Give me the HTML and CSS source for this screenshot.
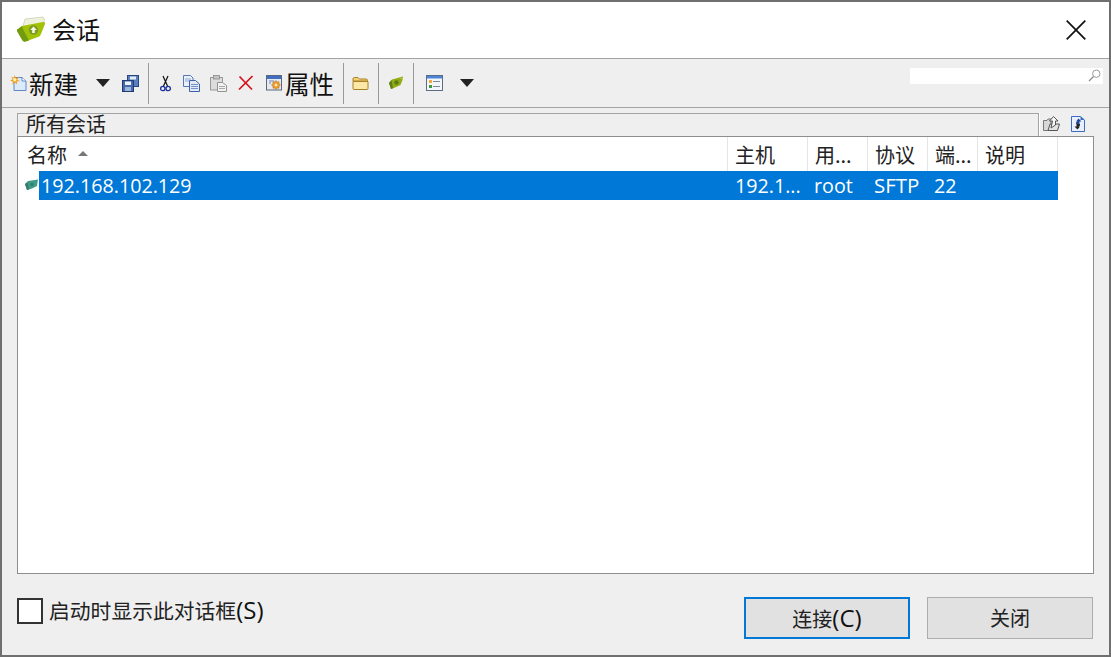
FILE: index.html
```html
<!DOCTYPE html>
<html lang="zh">
<head>
<meta charset="utf-8">
<title>会话</title>
<link rel="stylesheet" href="styles.css">
</head>
<body>
<div class="dialog">
  <header class="titlebar">
    <svg class="title-icon" width="30" height="27" viewBox="0 0 30 27"><path d="M7 10 L9 3 L27 1 L28.500 3 L27 10 L12 16Z" fill="#eef2dc" stroke="#c4cca8" stroke-width=".7"/><path d="M6 10 L27 6 Q29.500 5.500 29 8 L24.500 19 Q24 20.500 22 21 L9.500 25.500 Q7.500 26 6.500 24.500 L1 15 Q.5 13.500 2 13Z" fill="#a2c208"/><path d="M1 15 L6.500 24.500 Q7.500 26 9.500 25.500 L13 24.500 L7.500 14 L6 10 L2 13 Q.5 13.500 1 15Z" fill="#719c12"/><circle cx="17.500" cy="14" r="4.700" fill="#7f9a20"/><path d="M17.500 10.500 L20.800 14 H18.800 V17 H16.200 V14 H14.200Z" fill="#f7f8e6"/></svg>
    <h1 class="title">会话</h1>
    <svg class="close" width="20" height="20" viewBox="0 0 20 20"><path d="M.7.700 19.300 19.300M19.300.700.700 19.300" stroke="#111" stroke-width="1.700" fill="none"/></svg>
  </header>

  <div class="toolbar">
    <svg class="ic m-new" width="17" height="17" viewBox="0 0 17 17"><path d="M4 2.500H12L16 6V15.500H4Z" fill="#dcebfb" stroke="#5f86c4"/><path d="M12 2.500V6H16" fill="#fff" stroke="#5f86c4"/><path d="M4.500 0 5.800 3.200 9 1.800 7.200 4.700 9.800 6 6.800 6.500 7 9.500 4.800 7.300 2.500 9.500 2.800 6.500 0 5.500 2.800 4.200 1.200 1.500 3.800 3Z" fill="#f59a18"/><circle cx="4.800" cy="4.800" r="1.700" fill="#fff6b0"/></svg>
    <span class="big m-newtext">新建</span>
    <span class="arrow m-arrow1"></span>
    <svg class="ic m-save" width="17" height="17" viewBox="0 0 17 17"><rect x="5.500" y=".5" width="11" height="11" fill="#5a7fbf" stroke="#26467f"/><rect x="8" y="1.500" width="6" height="3" fill="#e4ecf8"/><rect x=".5" y="5.500" width="11" height="11" fill="#4669ac" stroke="#1f3c72"/><rect x="3" y="6.500" width="6" height="3.500" fill="#eef3fb"/><rect x="3" y="12" width="6" height="4" fill="#9db4dc"/></svg>
    <span class="sep m-sep1"></span>
    <svg class="ic m-cut" width="11" height="17" viewBox="0 0 11 17"><path d="M3 1 7.500 11M8 1 3.500 11" stroke="#111" stroke-width="1.200" fill="none"/><circle cx="2.800" cy="13.500" r="2.200" fill="none" stroke="#1c2d9c" stroke-width="1.300"/><circle cx="8.200" cy="13.500" r="2.200" fill="none" stroke="#1c2d9c" stroke-width="1.300"/></svg>
    <svg class="ic m-copy" width="17" height="17" viewBox="0 0 17 17"><path d="M.5.500H7.500L10 3V11.500H.5Z" fill="#eaf0fa" stroke="#5578b8"/><path d="M2 4H8M2 6H6" stroke="#8da5d2"/><path d="M6.500 5.500H12.500L16.500 9V16.500H6.500Z" fill="#e1e9f7" stroke="#3d62a8"/><path d="M8 9.500H15M8 11.500H15M8 13.500H15" stroke="#7792c6"/></svg>
    <svg class="ic m-paste" width="17" height="17" viewBox="0 0 17 17"><rect x=".5" y="2.500" width="12" height="12.500" fill="#dcdcdc" stroke="#9a9a9a"/><rect x="3.500" y=".5" width="6" height="3.500" fill="#c4c4c4" stroke="#8d8d8d" stroke-width=".8"/><path d="M7.500 7.500H12.500L16.500 10.500V16.500H7.500Z" fill="#f2f2f2" stroke="#939393"/><path d="M9 11.500H15M9 13.500H15" stroke="#aaa"/></svg>
    <svg class="ic m-del" width="16" height="16" viewBox="0 0 16 16"><path d="M1.500 1.500 14 14.500M14.500 1 1 14.500" stroke="#d8121c" stroke-width="1.700" fill="none"/></svg>
    <svg class="ic m-prop" width="16" height="16" viewBox="0 0 16 16"><rect x=".5" y=".5" width="15" height="14.500" fill="#e8e9ee" stroke="#5c6680"/><rect x="1" y="1" width="14" height="3" fill="#3f6fc0"/><path d="M3 6H8M3 8H5" stroke="#6d8bc8"/><path d="M10 5.500 11 7 13 6.800 13 8.800 14.500 10 13 11.200 13 13.200 11 13 10 14.500 9 13 7 13.200 7 11.200 5.500 10 7 8.800 7 6.800 9 7Z" fill="#f0a030" stroke="#a96a14" stroke-width=".5"/><circle cx="10" cy="10" r="1.200" fill="#fff4d0"/></svg>
    <span class="big m-proptext">属性</span>
    <span class="sep m-sep2"></span>
    <svg class="ic m-folder" width="17" height="15" viewBox="0 0 17 15"><path d="M1 3 Q1 1.500 2.500 1.500H6L7.500 3H14Q15.500 3 15.500 4.500V5H1Z" fill="#f3cf76" stroke="#a88226"/><path d="M1 5.500H16V12.500Q16 13.500 15 13.500H2Q1 13.500 1 12.500Z" fill="#fce7a6" stroke="#a88226"/></svg>
    <span class="sep m-sep3"></span>
    <svg class="ic m-leaf" width="16" height="14" viewBox="0 0 16 14"><path d="M1 7 L4 3.500 L15 .5 L14.500 4 L12.500 9 L7 11.500 L3 13Z" fill="#8fad12"/><path d="M1 7 L3 13 L5 12.300 L3.500 4Z" fill="#5e7f18"/><circle cx="8.500" cy="6.500" r="2.200" fill="#5d7a18"/><path d="M12.500 2.500H15" stroke="#b9cf55"/></svg>
    <span class="sep m-sep4"></span>
    <svg class="ic m-list" width="17" height="16" viewBox="0 0 17 16"><rect x=".5" y=".5" width="16" height="15" fill="#f4f6f8" stroke="#5c6c88"/><rect x="1" y="1" width="15" height="2.500" fill="#4b86d8"/><rect x="3" y="5" width="3" height="3" fill="#f0a93a"/><rect x="3" y="10" width="3" height="3" fill="#3f9a3f"/><path d="M7 6.500H14M7 11.500H14" stroke="#7a8aa0"/></svg>
    <span class="arrow m-arrow2"></span>
    <div class="search">
      <svg width="13" height="13" viewBox="0 0 13 13"><circle cx="8.300" cy="4.700" r="3.700" fill="none" stroke="#9a9a9a"/><path d="M5.500 7.500 1 12" stroke="#8a8a8a" stroke-width="1.300"/></svg>
    </div>
  </div>

  <main class="content">
    <div class="group-row">
      <div class="group-tab"><span class="group-label">所有会话</span></div>
      <svg class="ic g-up" width="17" height="15" viewBox="0 0 17 15"><path d="M.5 4.500H4L5 3H8V14.500H.5Z" fill="#d8d8d8" stroke="#777"/><path d="M5 14.500 7 8H16.500L14.500 14.500Z" fill="#e2e2e2" stroke="#555"/><path d="M10.500 .5 15 5H12.500V9L8 12 9.500 5H6.500Z" fill="#f7f7f7" stroke="#444" stroke-width=".9"/></svg>
      <svg class="ic g-sync" width="14" height="16" viewBox="0 0 14 16"><path d="M.5.500H9.500L13.500 4V15.500H.5Z" fill="#e8f0ff" stroke="#3d6cc0"/><path d="M9.500.500V4H13.500Z" fill="#3d6cc0"/><path d="M7.500 2.500 10.500 5.500H8.500V8H5V6.500L6.500 5.500H5Z" fill="#1e4796"/><path d="M6.500 13.500 3.500 10.500H5.500V8H9V9.500L7.500 10.500H9Z" fill="#222"/></svg>
    </div>

    <div class="list">
      <div class="grid list-head">
        <div class="hcell name-head">名称<span class="sort"></span></div>
        <div class="hcell">主机</div>
        <div class="hcell">用...</div>
        <div class="hcell">协议</div>
        <div class="hcell">端...</div>
        <div class="hcell">说明</div>
      </div>
      <div class="row">
        <svg class="row-icon" width="15" height="12" viewBox="0 0 15 12"><path d="M1 5 4 2 14 .5 13 7 8 9.500 3 11Z" fill="#3f9a86"/><path d="M1 5 3 11 5 10.500 3.500 3.500Z" fill="#3a7a72"/><circle cx="8" cy="5.500" r="1.700" fill="#2e7e72"/></svg>
        <div class="cell name">192.168.102.129</div>
        <div class="cell c-host">192.1...</div>
        <div class="cell c-user">root</div>
        <div class="cell c-proto">SFTP</div>
        <div class="cell c-port">22</div>
        <div class="cell c-desc"></div>
      </div>
    </div>

    <footer class="footer">
      <label class="check"><span class="box"></span><span class="check-text">启动时显示此对话框<span class="latin">(S)</span></span></label>
      <div class="buttons">
        <button class="btn primary">连接<span class="latin">(C)</span></button>
        <button class="btn">关闭</button>
      </div>
    </footer>
  </main>
</div>
</body>
</html>
```
FILE: styles.css
```css
* { box-sizing: border-box; }
html, body { margin: 0; padding: 0; }
body {
  width: 1111px;
  height: 657px;
  overflow: hidden;
  font-family: "Noto Sans CJK SC", sans-serif;
  color: #111;
}
.dialog {
  width: 1111px;
  height: 657px;
  border: 2px solid #6f6f6f;
  background: #efefef;
  display: flex;
  flex-direction: column;
}
.titlebar {
  height: 57px;
  flex: none;
  background: #fff;
  border-bottom: 1px solid #a3a3a3;
  display: flex;
  align-items: center;
  padding: 0 23px 0 14px;
}
.title-icon { flex: none; margin-top: -1px; }
.title {
  margin: -2px 0 0 6px;
  font-size: 24px;
  line-height: 32px;
  font-weight: 400;
}
.close { margin-left: auto; margin-top: -1px; }

.toolbar {
  height: 49px;
  flex: none;
  border-bottom: 1px solid #a3a3a3;
  display: flex;
  align-items: center;
  padding-left: 8px;
}
.ic { flex: none; display: block; }
.big {
  font-size: 24.500px;
  line-height: 32px;
  margin-top: 2px;
  flex: none;
  white-space: nowrap;
}
.arrow {
  flex: none;
  width: 0;
  height: 0;
  border-left: 7px solid transparent;
  border-right: 7px solid transparent;
  border-top: 8px solid #222;
}
.sep { flex: none; width: 1px; height: 41px; background: #9a9a9a; }
.m-newtext { margin-left: 2px; width: 50px; }
.m-arrow1 { margin-left: 17px; }
.m-save { margin-left: 12px; }
.m-sep1 { margin-left: 9px; }
.m-cut { margin-left: 11px; }
.m-copy { margin-left: 12px; }
.m-paste { margin-left: 10px; }
.m-del { margin-left: 11px; }
.m-prop { margin-left: 12px; }
.m-proptext { margin-left: 3px; width: 50px; }
.m-sep2 { margin-left: 8px; }
.m-folder { margin-left: 8px; }
.m-sep3 { margin-left: 9px; }
.m-leaf { margin-left: 9px; }
.m-sep4 { margin-left: 9px; }
.m-list { margin-left: 12px; }
.m-arrow2 { margin-left: 17px; }
.search {
  margin-left: auto;
  margin-right: 6px;
  margin-top: -15px;
  width: 193px;
  height: 16px;
  background: #fff;
  display: flex;
  justify-content: flex-end;
  align-items: center;
  padding-right: 2px;
}

.content {
  flex: 1;
  min-height: 0;
  display: flex;
  flex-direction: column;
  padding: 5px 15px 16px;
}
.group-row {
  height: 23px;
  flex: none;
  display: flex;
  align-items: flex-start;
}
.group-tab {
  width: 1022px;
  height: 23px;
  flex: none;
  border: 1px solid #a3a3a3;
  border-bottom: 0;
  box-shadow: 1px 0 0 #fff;
  padding-left: 8px;
}
.group-label {
  display: block;
  font-size: 20px;
  line-height: 20px;
  color: #222;
}
.g-up { margin-left: 4px; margin-top: 3px; }
.g-sync { margin-left: 11px; margin-top: 3px; }

.list {
  width: 1077px;
  height: 438px;
  flex: none;
  background: #fff;
  border: 1px solid #8e8e8e;
}
.grid, .row {
  display: grid;
  width: 1040px;
}
.grid { grid-template-columns: 710px 80px 60px 60px 50px 80px; height: 34px; }
.row { grid-template-columns: 21px 689px 80px 60px 60px 50px 80px; height: 29px; }
.hcell {
  border-right: 1px solid #e5e5e5;
  padding-left: 7px;
  padding-top: 2px;
  font-size: 20px;
  line-height: 30px;
  color: #222;
  white-space: nowrap;
  overflow: hidden;
  display: flex;
  align-items: center;
}
.name-head { padding-left: 9px; }
.sort {
  width: 0;
  height: 0;
  margin-left: 11px;
  margin-top: -3px;
  border-left: 5px solid transparent;
  border-right: 5px solid transparent;
  border-bottom: 5px solid #777;
}
.row-icon { align-self: center; justify-self: end; margin-top: -2px; }
.cell {
  background: #0078d7;
  color: #fff;
  font-family: "Open Sans", "Noto Sans CJK SC", sans-serif;
  font-size: 19.700px;
  line-height: 29px;
  white-space: nowrap;
  overflow: hidden;
  padding-left: 7px;
}
.name { padding-left: 2px; }
.c-user, .c-proto, .c-port { padding-left: 6px; }
.c-proto { font-size: 20.500px; }

.footer {
  flex: 1;
  display: flex;
  justify-content: space-between;
  align-items: flex-start;
  padding-top: 23px;
}
.check { display: flex; align-items: center; margin-top: 1px; }
.box {
  width: 26px;
  height: 26px;
  background: #fff;
  border: 2px solid #333;
  flex: none;
}
.check-text {
  margin-left: 6px;
  font-size: 20.800px;
  line-height: 26px;
  margin-top: -3px;
  color: #222;
  white-space: nowrap;
}
.latin {
  font-family: "Open Sans", sans-serif;
  font-size: 24px;
  line-height: 26px;
  color: #111;
}
.buttons { display: flex; gap: 17px; margin-right: 1px; }
.btn {
  width: 166px;
  height: 42px;
  background: #e1e1e1;
  border: 1px solid #adadad;
  border-radius: 0;
  font-family: inherit;
  font-size: 20px;
  line-height: 26px;
  color: #222;
  padding: 0;
}
.primary { border: 2px solid #0078d7; }
```
